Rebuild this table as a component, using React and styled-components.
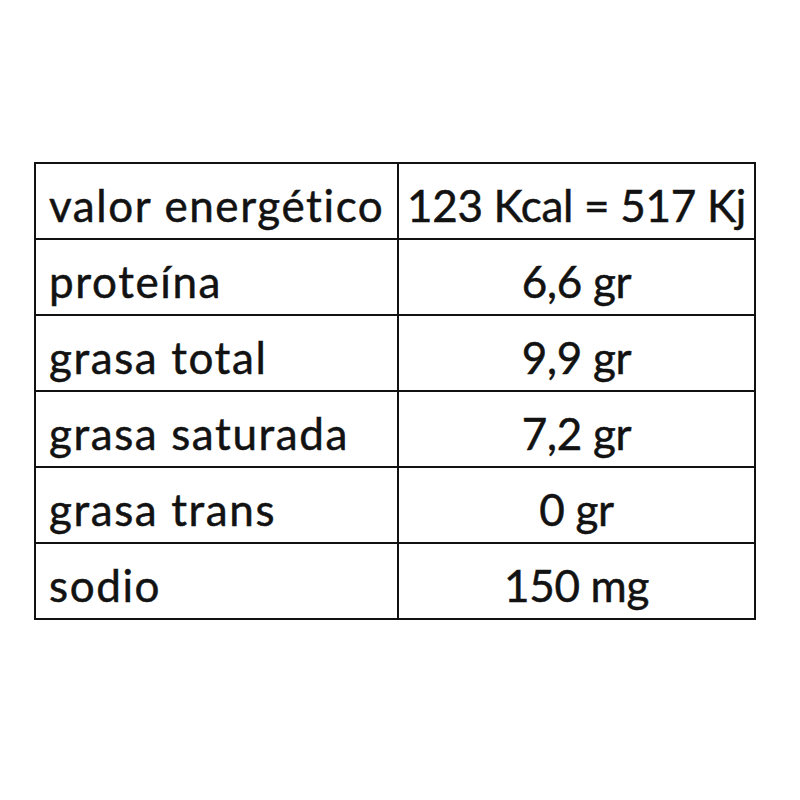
import React from "react";
import styled, { createGlobalStyle } from "styled-components";

const Global = createGlobalStyle`
  html, body {
    margin: 0;
    padding: 0;
    background: #ffffff;
  }
  body {
    font-family: Lato, "Open Sans", "Liberation Sans", sans-serif;
  }
`;

const Page = styled.div`
  width: 800px;
  height: 800px;
  box-sizing: border-box;
  padding-top: 162px;
  padding-left: 34px;
`;

const Table = styled.table`
  border-collapse: collapse;
  width: 722px;
  color: #121212;
`;

const Cell = styled.td`
  border: 2.5px solid #111;
  height: 76px;
  box-sizing: border-box;
  vertical-align: bottom;
  padding: 0 0 11px ${(p) => (p.$center ? "0" : "13px")};
  text-align: ${(p) => (p.$center ? "center" : "left")};
  font-size: 44px;
  letter-spacing: ${(p) => (p.$center ? "-0.3px" : "1.6px")};
  line-height: 1;
  white-space: nowrap;
  -webkit-text-stroke: 0.5px #121212;
  width: ${(p) => (p.$center ? "357px" : "auto")};
`;

const rows = [
  ["valor energético", "123 Kcal = 517 Kj"],
  ["proteína", "6,6 gr"],
  ["grasa total", "9,9 gr"],
  ["grasa saturada", "7,2 gr"],
  ["grasa trans", "0 gr"],
  ["sodio", "150 mg"],
];

export default function App() {
  return (
    <>
      <Global />
      <Page>
        <Table>
          <tbody>
            {rows.map(([name, value]) => (
              <tr key={name}>
                <Cell>{name}</Cell>
                <Cell $center>{value}</Cell>
              </tr>
            ))}
          </tbody>
        </Table>
      </Page>
    </>
  );
}
